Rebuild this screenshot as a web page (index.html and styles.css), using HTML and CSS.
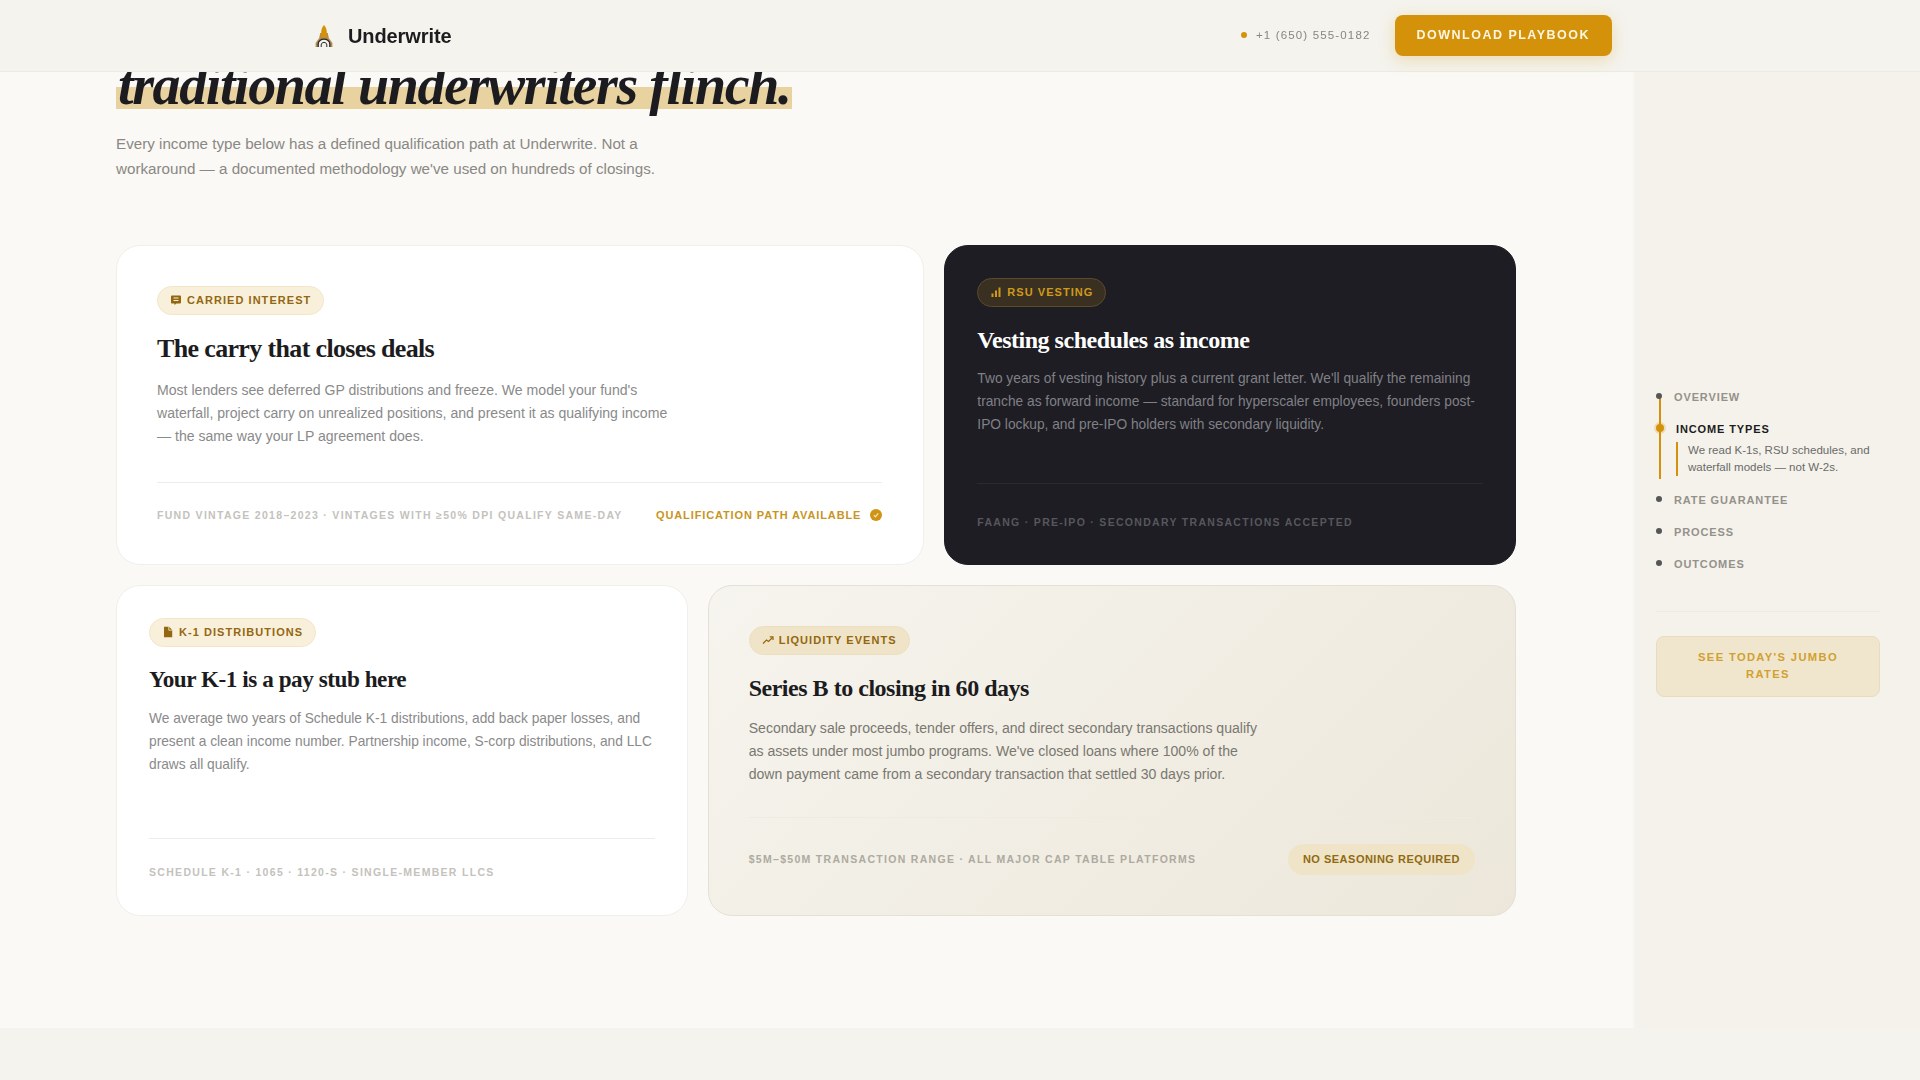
FILE: index.html
```html
<!DOCTYPE html>
<html lang="en">
<head>
<meta charset="utf-8">
<title>Underwrite</title>
<link rel="stylesheet" href="styles.css">
</head>
<body>
<header class="topbar">
  <a class="brand" href="#">
    <svg class="brand-mark" viewBox="0 0 18 22" width="18" height="22" aria-hidden="true">
      <path d="M5.200 8 L12.800 8 L13.800 13 L17.400 18 L17.400 22 L.6 22 L.6 18 L4.200 13Z" fill="#b58a4e"/>
      <path d="M9 0 C10.800 2 11.600 4 11.800 7 L12 12.500 L6 12.500 L6.200 7 C6.400 4 7.200 2 9 0Z" fill="#d4920a"/>
      <path d="M3.200 22 V19 C3.200 16 6 14.200 9 14.200 C12 14.200 14.800 16 14.800 19 V22 Z" fill="#f3f1ec"/>
      <path d="M3.200 22 V19 C3.200 16 6 14.200 9 14.200 C12 14.200 14.800 16 14.800 19 V22" fill="none" stroke="#2a2a2e" stroke-width="1.300"/>
      <path d="M6.200 22 V20 C6.200 18.400 7.400 17.400 9 17.400 C10.600 17.400 11.800 18.400 11.800 20 V22" fill="none" stroke="#2a2a2e" stroke-width="1"/>
    </svg>
    <span class="brand-name">Underwrite</span>
  </a>
  <div class="topbar-right">
    <span class="phone"><i class="phone-dot"></i>+1 (650) 555-0182</span>
    <a class="download" href="#">Download Playbook</a>
  </div>
</header>

<div class="layout">
  <main class="content">
    <section class="hero">
      <h1>We underwrite income where<br><em>traditional underwriters flinch.</em></h1>
      <p class="lede">Every income type below has a defined qualification path at Underwrite. Not a workaround — a documented methodology we've used on hundreds of closings.</p>
    </section>

    <section class="grid">
      <article class="card card-wide card-white card-carry">
        <span class="tag">
          <svg class="tag-icon" viewBox="0 0 12 12" aria-hidden="true"><path d="M2 1.500h8a1 1 0 0 1 1 1v6a1 1 0 0 1-1 1H6.500L4.500 11V9.500H2a1 1 0 0 1-1-1v-6a1 1 0 0 1 1-1Z" fill="currentColor"/><path d="M3.500 4h5M3.500 6.500h5" stroke="#f9f0dc" stroke-width="1"/></svg>
          Carried interest
        </span>
        <h2>The carry that closes deals</h2>
        <p class="desc">Most lenders see deferred GP distributions and freeze. We model your fund's waterfall, project carry on unrealized positions, and present it as qualifying income — the same way your LP agreement does.</p>
        <div class="foot foot-a">
          <span class="note">Fund vintage 2018–2023 · Vintages with ≥50% DPI qualify same-day</span>
          <span class="path">Qualification path available
            <svg class="path-check" viewBox="0 0 12 12" aria-hidden="true"><circle cx="6" cy="6" r="6" fill="#cf9316"/><path d="M3.800 6.200 5.400 7.800 8.300 4.400" fill="none" stroke="#f7e7c0" stroke-width="1.200"/></svg>
          </span>
        </div>
      </article>

      <article class="card card-narrow card-dark">
        <span class="tag">
          <svg class="tag-icon" viewBox="0 0 12 12" aria-hidden="true"><path d="M1.500 7.500h2V11h-2zM5 4.500h2V11H5zM8.500 1.500h2V11h-2z" fill="currentColor"/></svg>
          RSU vesting
        </span>
        <h2>Vesting schedules as income</h2>
        <p class="desc">Two years of vesting history plus a current grant letter. We'll qualify the remaining tranche as forward income — standard for hyperscaler employees, founders post-IPO lockup, and pre-IPO holders with secondary liquidity.</p>
        <div class="foot foot-b">
          <span class="note">FAANG · Pre-IPO · Secondary transactions accepted</span>
        </div>
      </article>

      <article class="card card-narrow card-white card-k1">
        <span class="tag">
          <svg class="tag-icon" viewBox="0 0 12 12" aria-hidden="true"><path d="M2 .8h5L10.200 4v7.200H2Z" fill="currentColor"/><path d="M6.800.8v3.400h3.400" fill="none" stroke="#f9f0dc" stroke-width=".8"/></svg>
          K-1 distributions
        </span>
        <h2>Your K-1 is a pay stub here</h2>
        <p class="desc">We average two years of Schedule K-1 distributions, add back paper losses, and present a clean income number. Partnership income, S-corp distributions, and LLC draws all qualify.</p>
        <div class="foot foot-c">
          <span class="note">Schedule K-1 · 1065 · 1120-S · Single-member LLCs</span>
        </div>
      </article>

      <article class="card card-wide card-sand">
        <span class="tag">
          <svg class="tag-icon" viewBox="0 0 12 12" aria-hidden="true"><path d="M1 9.500 4.500 6l2 1.500L10.500 3.500" fill="none" stroke="currentColor" stroke-width="1.200"/><path d="M7.800 2.800h3.200V6" fill="none" stroke="currentColor" stroke-width="1.200"/></svg>
          Liquidity events
        </span>
        <h2>Series B to closing in 60 days</h2>
        <p class="desc">Secondary sale proceeds, tender offers, and direct secondary transactions qualify as assets under most jumbo programs. We've closed loans where 100% of the down payment came from a secondary transaction that settled 30 days prior.</p>
        <div class="foot foot-d">
          <span class="note">$5M–$50M transaction range · All major cap table platforms</span>
          <span class="seasoning">No seasoning required</span>
        </div>
      </article>
    </section>
  </main>

  <aside class="rail">
    <nav class="steps">
      <a class="step" href="#"><i class="step-dot"></i><span class="step-name">Overview</span></a>
      <div class="step step-active">
        <i class="step-dot"></i>
        <div>
          <span class="step-name">Income types</span>
          <p class="step-note">We read K-1s, RSU schedules, and waterfall models — not W-2s.</p>
        </div>
      </div>
      <a class="step" href="#"><i class="step-dot"></i><span class="step-name">Rate guarantee</span></a>
      <a class="step" href="#"><i class="step-dot"></i><span class="step-name">Process</span></a>
      <a class="step" href="#"><i class="step-dot"></i><span class="step-name">Outcomes</span></a>
    </nav>
    <a class="rates" href="#">See today's jumbo rates</a>
  </aside>
</div>
<div class="below"></div>
</body>
</html>
```

FILE: styles.css
```css
* { box-sizing: border-box; }
html, body { margin: 0; padding: 0; }
body {
  background: #f5f3ed;
  color: #1c1c20;
  font-family: "Liberation Sans", Arial, sans-serif;
  overflow: hidden;
  height: 1080px;
}
a { color: inherit; text-decoration: none; }

.topbar {
  position: fixed;
  top: 0; left: 0; right: 0;
  z-index: 10;
  height: 72px;
  padding: 0 308px 0 312px;
  display: flex;
  align-items: center;
  justify-content: space-between;
  background: #f4f3ed;
  border-bottom: 1px solid #eceae4;
}
.brand { display: flex; align-items: center; gap: 15px; padding-top: 1px; }
.brand-mark { margin-left: 3px; }
.brand-name { font-size: 20px; font-weight: 700; letter-spacing: -0.005em; color: #1c1c20; }
.topbar-right { display: flex; align-items: center; gap: 24px; }
.phone {
  display: flex;
  align-items: center;
  gap: 9px;
  margin-top: -1px;
  font-size: 11.52px;
  letter-spacing: 0.1em;
  color: #88867f;
}
.phone-dot { width: 6px; height: 6px; border-radius: 50%; background: #d4920a; }
.download {
  display: block;
  padding: 13px 22px;
  border-radius: 8px;
  background: #d4920a;
  color: #fdf6e3;
  font-size: 12.48px;
  font-weight: 700;
  line-height: 15px;
  letter-spacing: 0.121em;
  text-transform: uppercase;
  box-shadow: 0 4px 16px rgba(212, 146, 10, 0.25);
}

.layout {
  display: grid;
  grid-template-columns: 1fr 287px;
  height: 1028px;
}
.content {
  background: #faf9f5;
  padding: 0 117px 0 116px;
  min-width: 0;
}
.rail {
  background: #f4f2eb;
  padding: 389px 40px 0 23px;
  box-shadow: inset 6px 0 6px -6px rgba(250, 249, 245, 0.9);
}

.hero { margin-top: -6.3px; }
h1 {
  margin: 0;
  font-family: "Liberation Serif", "Times New Roman", serif;
  font-size: 56px;
  font-weight: 700;
  line-height: 61.6px;
  letter-spacing: -0.025em;
  color: #1c1c20;
  white-space: nowrap;
}
h1 em {
  padding: 0 2px;
  background: linear-gradient(transparent 54%, #e8d29f 54%, #e8d29f 89%, transparent 89%);
}
.lede {
  margin: 13.8px 0 0;
  max-width: 560px;
  font-size: 15.2px;
  line-height: 25.5px;
  color: #8a8884;
}

.grid {
  margin-top: 63.3px;
  display: grid;
  grid-template-columns: repeat(12, 1fr);
  grid-template-rows: 320px 331px;
  gap: 20px;
}
.card {
  display: flex;
  flex-direction: column;
  align-items: flex-start;
  border-radius: 24px;
  border: 1px solid transparent;
}
.card-wide { grid-column: span 7; padding: 40px; }
.card-narrow { grid-column: span 5; padding: 32px; }
.card-white { background: #fff; border-color: #f1efe9; }
.card-carry { padding-right: 41px; }
.card-dark { background: #1d1d23; border-color: #1d1d23; }
.card-sand { background: linear-gradient(135deg, #f6f4ee 0%, #ece7da 100%); border-color: #e4e0d4; }

.tag {
  display: inline-flex;
  align-items: center;
  gap: 5px;
  height: 29px;
  padding: 0 12px;
  border-radius: 15px;
  border: 1px solid #f3e6c8;
  background: #f9f0dc;
  color: #93670f;
  font-size: 11px;
  font-weight: 700;
  letter-spacing: 0.095em;
  text-transform: uppercase;
  white-space: nowrap;
}
.tag-icon { width: 12px; height: 12px; }
.card-dark .tag { background: #3a3022; border-color: #5c4b28; color: #cf9a1c; }
.card-sand .tag { background: #efe4c8; border-color: #ebdfc0; }

h2 {
  margin: 19px 0 13.5px;
  font-family: "Liberation Serif", "Times New Roman", serif;
  font-size: 24px;
  font-weight: 700;
  line-height: 29px;
  letter-spacing: -0.02em;
  color: #1c1c20;
}
.card-wide h2 { margin-bottom: 15px; }
.card-carry h2 { font-size: 26px; line-height: 31px; margin: 18px 0 15px; letter-spacing: -0.025em; }
.card-k1 h2 { font-size: 23.2px; margin: 18px 0 14.5px; }
.card-sand h2 { margin-bottom: 14px; }
.card-dark h2 { color: #fff; }

.desc {
  margin: 0;
  max-width: 520px;
  font-size: 14.08px;
  line-height: 23.2px;
  color: #8a8a8a;
}
.card-narrow .desc { max-width: none; font-size: 13.76px; line-height: 22.7px; }
.card-dark .desc { color: #808086; }
.card-sand .desc { color: #7a7870; }

.foot {
  margin-top: auto;
  width: 100%;
  display: flex;
  align-items: center;
  justify-content: space-between;
  border-top: 1px solid #eeece6;
}
.foot-a { padding-top: 23px; }
.foot-b { padding-top: 29px; margin-bottom: 1px; border-top-color: rgba(255, 255, 255, 0.06); }
.foot-c { padding-top: 24px; margin-bottom: 2px; }
.foot-d { padding-top: 26px; border-top-color: #eeebe1; }
.note {
  font-size: 10.5px;
  font-weight: 700;
  line-height: 18px;
  letter-spacing: 0.124em;
  text-transform: uppercase;
  color: #c4c2bd;
  white-space: nowrap;
}
.card-dark .note { color: #57575c; }
.card-sand .note { color: #adaa9f; }
.path {
  display: inline-flex;
  align-items: center;
  gap: 9px;
  font-size: 11px;
  font-weight: 700;
  letter-spacing: 0.08em;
  line-height: 18px;
  text-transform: uppercase;
  color: #c8951e;
  white-space: nowrap;
}
.path-check { width: 12px; height: 12px; }
.seasoning {
  height: 31px;
  padding: 0 15px;
  display: inline-flex;
  align-items: center;
  border-radius: 16px;
  background: #efe4c8;
  color: #8f6a12;
  font-size: 11px;
  font-weight: 700;
  letter-spacing: 0.045em;
  text-transform: uppercase;
  white-space: nowrap;
}

.steps {
  position: relative;
  display: flex;
  flex-direction: column;
  gap: 16px;
  padding-bottom: 39px;
  border-bottom: 1px solid #eeebe4;
}
.steps::before {
  content: "";
  position: absolute;
  left: 3px;
  top: 7px;
  width: 1.5px;
  height: 83px;
  background: #d4920a;
}
.step { position: relative; display: flex; align-items: flex-start; gap: 12px; }
.step-dot {
  flex: none;
  width: 6px;
  height: 6px;
  margin-top: 4px;
  border-radius: 50%;
  background: #55555a;
}
.step-name {
  display: block;
  font-size: 11px;
  font-weight: 700;
  line-height: 16px;
  letter-spacing: 0.08em;
  text-transform: uppercase;
  color: #94918b;
}
.step-active .step-dot {
  width: 8px;
  height: 8px;
  margin-top: 3px;
  background: #d4920a;
  box-shadow: 0 0 0 2px rgba(212, 146, 10, 0.22);
}
.step-active .step-name { color: #1c1c20; }
.step-note {
  margin: 5px 0 0;
  padding-left: 10px;
  border-left: 2px solid #d4920a;
  font-size: 11.52px;
  line-height: 17px;
  color: #6a6a68;
}
.rates {
  display: block;
  margin-top: 24px;
  padding: 11.5px 24px 13.5px;
  border-radius: 8px;
  border: 1px solid #e8dcbc;
  background: #f0e6cd;
  color: #d1a030;
  font-size: 11.2px;
  font-weight: 700;
  line-height: 17px;
  letter-spacing: 0.12em;
  text-align: center;
  text-transform: uppercase;
}
.below { height: 52px; }
```
